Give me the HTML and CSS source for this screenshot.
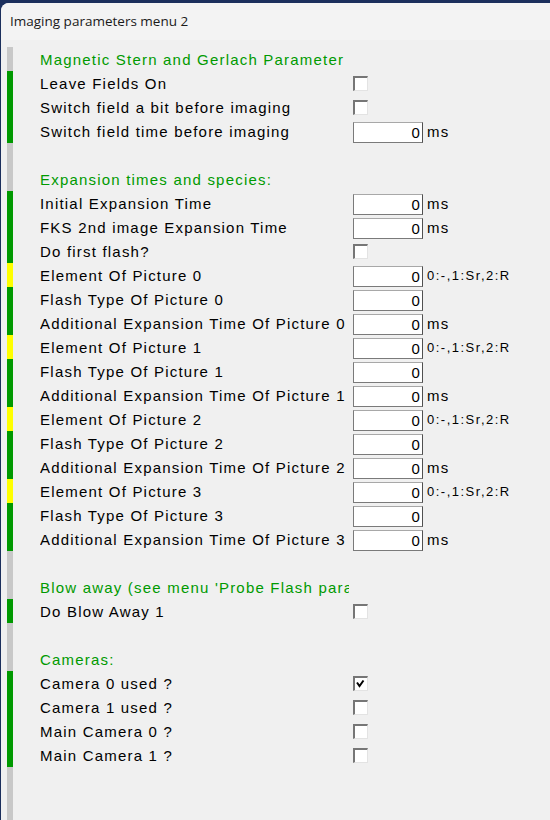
FILE: index.html
```html
<!DOCTYPE html>
<html>
<head>
<meta charset="utf-8">
<link rel="stylesheet" href="styles.css">
</head>
<body>
<div class="window">
  <div class="titlebar">Imaging parameters menu 2</div>
  <div class="content">
    <div class="row"><span class="mark gray"></span><span class="label head">Magnetic Stern and Gerlach Parameter</span></div>
    <div class="row"><span class="mark green"></span><span class="label">Leave Fields On</span><span class="check"></span></div>
    <div class="row"><span class="mark green"></span><span class="label">Switch field a bit before imaging</span><span class="check"></span></div>
    <div class="row"><span class="mark green"></span><span class="label">Switch field time before imaging</span><span class="input">0</span><span class="unit">ms</span></div>
    <div class="row"><span class="mark gray"></span></div>
    <div class="row"><span class="mark gray"></span><span class="label head">Expansion times and species:</span></div>
    <div class="row"><span class="mark green"></span><span class="label">Initial Expansion Time</span><span class="input">0</span><span class="unit">ms</span></div>
    <div class="row"><span class="mark green"></span><span class="label">FKS 2nd image Expansion Time</span><span class="input">0</span><span class="unit">ms</span></div>
    <div class="row"><span class="mark green"></span><span class="label">Do first flash?</span><span class="check"></span></div>
    <div class="row"><span class="mark yellow"></span><span class="label">Element Of Picture 0</span><span class="input">0</span><span class="unit small">0:-,1:Sr,2:R</span></div>
    <div class="row"><span class="mark green"></span><span class="label">Flash Type Of Picture 0</span><span class="input">0</span></div>
    <div class="row"><span class="mark green"></span><span class="label">Additional Expansion Time Of Picture 0</span><span class="input">0</span><span class="unit">ms</span></div>
    <div class="row"><span class="mark yellow"></span><span class="label">Element Of Picture 1</span><span class="input">0</span><span class="unit small">0:-,1:Sr,2:R</span></div>
    <div class="row"><span class="mark green"></span><span class="label">Flash Type Of Picture 1</span><span class="input">0</span></div>
    <div class="row"><span class="mark green"></span><span class="label">Additional Expansion Time Of Picture 1</span><span class="input">0</span><span class="unit">ms</span></div>
    <div class="row"><span class="mark yellow"></span><span class="label">Element Of Picture 2</span><span class="input">0</span><span class="unit small">0:-,1:Sr,2:R</span></div>
    <div class="row"><span class="mark green"></span><span class="label">Flash Type Of Picture 2</span><span class="input">0</span></div>
    <div class="row"><span class="mark green"></span><span class="label">Additional Expansion Time Of Picture 2</span><span class="input">0</span><span class="unit">ms</span></div>
    <div class="row"><span class="mark yellow"></span><span class="label">Element Of Picture 3</span><span class="input">0</span><span class="unit small">0:-,1:Sr,2:R</span></div>
    <div class="row"><span class="mark green"></span><span class="label">Flash Type Of Picture 3</span><span class="input">0</span></div>
    <div class="row"><span class="mark green"></span><span class="label">Additional Expansion Time Of Picture 3</span><span class="input">0</span><span class="unit">ms</span></div>
    <div class="row"><span class="mark gray"></span></div>
    <div class="row"><span class="mark gray"></span><span class="label head">Blow away (see menu 'Probe Flash para</span></div>
    <div class="row"><span class="mark green"></span><span class="label">Do Blow Away 1</span><span class="check"></span></div>
    <div class="row"><span class="mark gray"></span></div>
    <div class="row"><span class="mark gray"></span><span class="label head">Cameras:</span></div>
    <div class="row"><span class="mark green"></span><span class="label">Camera 0 used ?</span><span class="check"><svg class="tick" viewBox="0 0 12 12" width="12" height="12"><polyline points="2,4.5 4.5,8 8.5,2.5" fill="none" stroke="#000" stroke-width="2"/></svg></span></div>
    <div class="row"><span class="mark green"></span><span class="label">Camera 1 used ?</span><span class="check"></span></div>
    <div class="row"><span class="mark green"></span><span class="label">Main Camera 0 ?</span><span class="check"></span></div>
    <div class="row"><span class="mark green"></span><span class="label">Main Camera 1 ?</span><span class="check"></span></div>
    <div class="row filler"><span class="mark gray"></span></div>
  </div>
</div>
</body>
</html>
```
FILE: styles.css
```css
html, body {
  margin: 0;
  padding: 0;
  height: 820px;
  overflow: hidden;
}
body {
  background: #1b2f5c;
}
.window {
  margin: 3px 0 0 1px;
  height: 817px;
  background: #f0f0f0;
  border-top-left-radius: 8px;
  display: flex;
  flex-direction: column;
  overflow: hidden;
}
.titlebar {
  height: 37px;
  flex: none;
  background: #f3f3f3;
  font-family: "Open Sans", "Noto Sans", sans-serif;
  font-size: 13.5px;
  color: #1a1a1a;
  padding-left: 9px;
  line-height: 37px;
  box-sizing: border-box;
}
.content {
  flex: 1;
  display: flex;
  flex-direction: column;
  padding-top: 7px;
  font-family: "Liberation Sans", Arial, sans-serif;
  font-size: 15px;
  letter-spacing: 1.2px;
  color: #000;
}
.row {
  display: flex;
  align-items: flex-start;
  height: 24px;
  flex: none;
}
.row.filler {
  flex: 1;
  height: auto;
  align-items: stretch;
}
.mark {
  width: 6px;
  height: 24px;
  margin-left: 6px;
  flex: none;
}
.filler .mark {
  height: auto;
}
.gray { background: #c8c8c8; }
.green { background: #009900; }
.yellow { background: #ffff00; }
.label {
  margin-left: 27px;
  width: 309px;
  flex: none;
  overflow: hidden;
  white-space: nowrap;
  line-height: 24px;
  padding-top: 1px;
  box-sizing: border-box;
  height: 24px;
}
.label.head {
  color: #009a00;
}
.input {
  margin-left: 4px;
  margin-top: 3px;
  width: 70px;
  height: 21px;
  box-sizing: border-box;
  background: #fff;
  border-style: solid;
  border-width: 1px;
  border-color: #a8a8a8 #505050 #7a7a7a #7a7a7a;
  text-align: right;
  padding-right: 1px;
  line-height: 19px;
  flex: none;
}
.unit {
  margin-left: 4px;
  line-height: 24px;
  padding-top: 1px;
  white-space: nowrap;
}
.unit.small {
  font-size: 13px;
  letter-spacing: 1.5px;
}
.check {
  margin-left: 4px;
  margin-top: 5px;
  width: 15px;
  height: 15px;
  box-sizing: border-box;
  background: #fff;
  border-style: solid;
  border-width: 2px 1px 1px 2px;
  border-color: #767676 #e3e3e3 #e3e3e3 #767676;
  flex: none;
}
.tick {
  display: block;
}
```
